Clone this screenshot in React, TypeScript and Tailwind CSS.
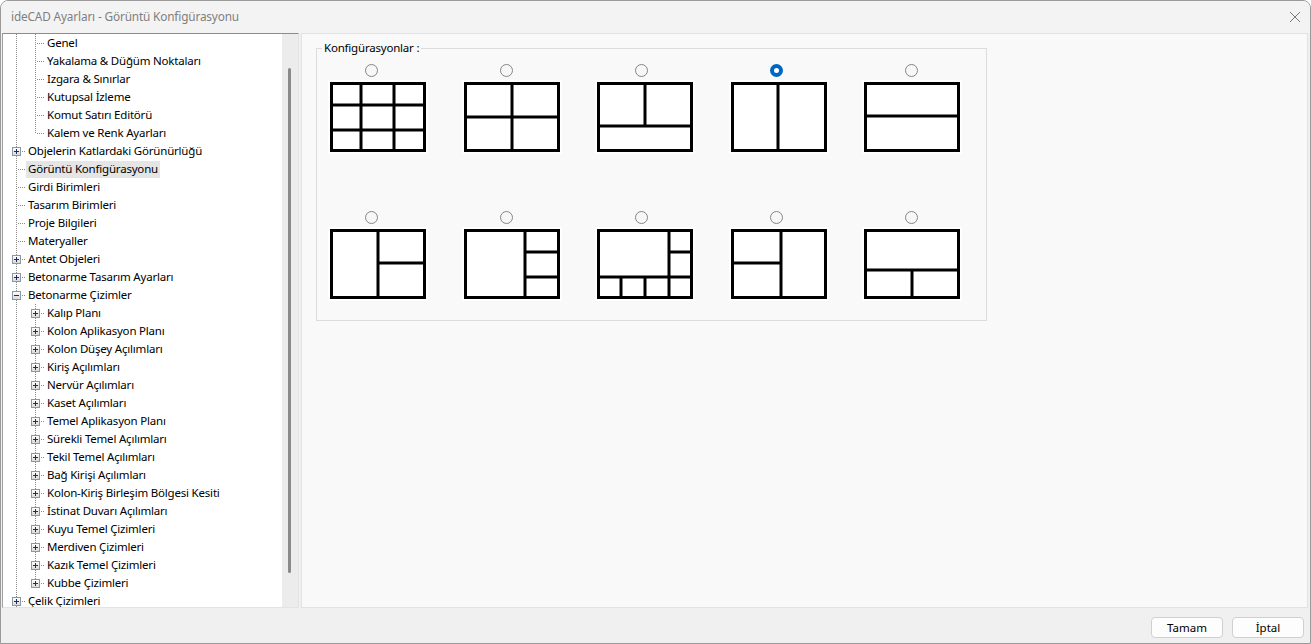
import React from "react";

type Row = {
  label: string;
  level: 0 | 1;
  box?: "+" | "-";
  last?: boolean;
  selected?: boolean;
};

const rows: Row[] = [
  { label: "Genel", level: 1 },
  { label: "Yakalama & Düğüm Noktaları", level: 1 },
  { label: "Izgara & Sınırlar", level: 1 },
  { label: "Kutupsal İzleme", level: 1 },
  { label: "Komut Satırı Editörü", level: 1 },
  { label: "Kalem ve Renk Ayarları", level: 1, last: true },
  { label: "Objelerin Katlardaki Görünürlüğü", level: 0, box: "+" },
  { label: "Görüntü Konfigürasyonu", level: 0, selected: true },
  { label: "Girdi Birimleri", level: 0 },
  { label: "Tasarım Birimleri", level: 0 },
  { label: "Proje Bilgileri", level: 0 },
  { label: "Materyaller", level: 0 },
  { label: "Antet Objeleri", level: 0, box: "+" },
  { label: "Betonarme Tasarım Ayarları", level: 0, box: "+" },
  { label: "Betonarme Çizimler", level: 0, box: "-" },
  { label: "Kalıp Planı", level: 1, box: "+" },
  { label: "Kolon Aplikasyon Planı", level: 1, box: "+" },
  { label: "Kolon Düşey Açılımları", level: 1, box: "+" },
  { label: "Kiriş Açılımları", level: 1, box: "+" },
  { label: "Nervür Açılımları", level: 1, box: "+" },
  { label: "Kaset Açılımları", level: 1, box: "+" },
  { label: "Temel Aplikasyon Planı", level: 1, box: "+" },
  { label: "Sürekli Temel Açılımları", level: 1, box: "+" },
  { label: "Tekil Temel Açılımları", level: 1, box: "+" },
  { label: "Bağ Kirişi Açılımları", level: 1, box: "+" },
  { label: "Kolon-Kiriş Birleşim Bölgesi Kesiti", level: 1, box: "+" },
  { label: "İstinat Duvarı Açılımları", level: 1, box: "+" },
  { label: "Kuyu Temel Çizimleri", level: 1, box: "+" },
  { label: "Merdiven Çizimleri", level: 1, box: "+" },
  { label: "Kazık Temel Çizimleri", level: 1, box: "+" },
  { label: "Kubbe Çizimleri", level: 1, box: "+", last: true },
  { label: "Çelik Çizimleri", level: 0, box: "+" },
];

const DOT = "#8a8a8a";

function Guide() {
  return (
    <svg width="19" height="18" className="shrink-0 block">
      <line x1="13.5" y1="0" x2="13.5" y2="18" stroke={DOT} strokeWidth="1" strokeDasharray="1 1" />
    </svg>
  );
}

function Connector({ box, last }: { box?: "+" | "-"; last?: boolean }) {
  return (
    <svg width="23" height="18" className="shrink-0 block">
      <defs>
        <linearGradient id="bx" x1="0" y1="0" x2="0" y2="1">
          <stop offset="0" stopColor="#ffffff" />
          <stop offset="1" stopColor="#d8d8d8" />
        </linearGradient>
      </defs>
      <line x1="13.5" y1="0" x2="13.5" y2={last ? 10 : 18} stroke={DOT} strokeWidth="1" strokeDasharray="1 1" />
      <line x1="15" y1="9.5" x2="23" y2="9.5" stroke={DOT} strokeWidth="1" strokeDasharray="1 1" />
      {box && (
        <g>
          <rect x="9.5" y="5.5" width="8" height="8" fill="url(#bx)" stroke="#8d96a8" strokeWidth="1" />
          <line x1="11" y1="9.5" x2="16" y2="9.5" stroke="#1f2d5c" strokeWidth="1" />
          {box === "+" && <line x1="13.5" y1="7" x2="13.5" y2="12" stroke="#1f2d5c" strokeWidth="1" />}
        </g>
      )}
    </svg>
  );
}

function TreeRow({ r }: { r: Row }) {
  return (
    <div className="flex h-[18px] items-start shrink-0">
      {r.level === 1 && <Guide />}
      <Connector box={r.box} last={r.last} />
      <span
        className={
          "mt-[1px] h-[17px] leading-[16px] px-[2px] whitespace-nowrap text-[11.5px] tracking-[-0.2px] text-black " +
          (r.selected ? "bg-[#e5e5e5]" : "")
        }
      >
        {r.label}
      </span>
    </div>
  );
}

type Seg = [number, number, number, number];
const layouts: Seg[][] = [
  [[31, 0, 31, 70], [64, 0, 64, 70], [0, 23, 96, 23], [0, 48, 96, 48]],
  [[48, 0, 48, 70], [0, 35, 96, 35]],
  [[0, 44, 96, 44], [48, 0, 48, 44]],
  [[47, 0, 47, 70]],
  [[0, 34, 96, 34]],
  [[48, 0, 48, 70], [48, 34, 96, 34]],
  [[61, 0, 61, 70], [61, 23, 96, 23], [61, 48, 96, 48]],
  [[0, 48, 96, 48], [72, 0, 72, 70], [72, 23, 96, 23], [24, 48, 24, 70], [48, 48, 48, 70]],
  [[50, 0, 50, 70], [0, 34, 50, 34]],
  [[0, 41, 96, 41], [48, 41, 48, 70]],
];

function Layout({ segs }: { segs: Seg[] }) {
  return (
    <svg width="100" height="74" className="block">
      <rect x="0" y="0" width="100" height="74" fill="#ffffff" />
      <g transform="translate(2,2)">
        {segs.map((s, i) => (
          <line key={i} x1={s[0]} y1={s[1]} x2={s[2]} y2={s[3]} stroke="#000" strokeWidth="3" />
        ))}
        <rect x="1.5" y="1.5" width="93" height="67" fill="none" stroke="#000" strokeWidth="3" />
      </g>
    </svg>
  );
}

function Radio({ checked }: { checked?: boolean }) {
  return checked ? (
    <div className="w-[13px] h-[13px] rounded-full bg-[#0067c0] flex items-center justify-center">
      <div className="w-[5px] h-[5px] rounded-full bg-white" />
    </div>
  ) : (
    <div className="w-[13px] h-[13px] rounded-full border border-[#858585] bg-[#f7f7f7]" />
  );
}

function RadioRow({ sel }: { sel: number }) {
  return (
    <div className="grid grid-cols-[repeat(5,13px)] gap-x-[121.9px] pl-[48px]">
      {[0, 1, 2, 3, 4].map((i) => (
        <Radio key={i} checked={i === sel} />
      ))}
    </div>
  );
}

function ImageRow({ start }: { start: number }) {
  return (
    <div className="grid grid-cols-[repeat(5,100px)] gap-x-[33.5px] pl-[11px]">
      {layouts.slice(start, start + 5).map((l, i) => (
        <Layout key={i} segs={l} />
      ))}
    </div>
  );
}

export default function App() {
  return (
    <div
      className="w-[1311px] h-[644px] bg-[#f0f0f0] border border-[#9a9a9a] rounded-t-[8px] overflow-hidden flex flex-col"
      style={{ fontFamily: "'Noto Sans', 'Open Sans', sans-serif" }}
    >
      {/* Title bar */}
      <div className="h-[32px] shrink-0 flex items-center justify-between pl-[10px] pr-[8px] bg-[#f3f3f3]">
        <span className="text-[11.8px] text-[#7f7f7f] tracking-[-0.15px]">ideCAD Ayarları - Görüntü Konfigürasyonu</span>
        <svg width="12" height="12" viewBox="0 0 12 12" className="mr-[1px]">
          <path d="M1 1 L11 11 M11 1 L1 11" stroke="#7a7a7a" strokeWidth="1" fill="none" />
        </svg>
      </div>

      {/* Body */}
      <div className="h-[575px] shrink-0 flex">
        {/* Tree */}
        <div className="ml-[1px] w-[297px] h-full flex border-t border-l border-t-[#8c8c8c] border-l-[#a0a0a0] border-r border-b border-r-[#e3e3e3] border-b-[#e3e3e3]">
          <div className="w-[279px] h-full bg-white overflow-hidden flex flex-col">
            {rows.map((r, i) => (
              <TreeRow key={i} r={r} />
            ))}
          </div>
          <div className="flex-1 h-full bg-[#ececec] flex justify-center pt-[34px]">
            <div className="w-[3px] h-[505px] rounded-full bg-[#8a8a8a] ml-[-1px]" />
          </div>
        </div>

        {/* Right panel */}
        <div className="ml-[2px] w-[1007px] h-full bg-[#f9f9f9] border border-[#e2e2e2]">
          <fieldset className="ml-[14px] mt-[6px] w-[671px] border border-[#dcdcdc] pb-[19px]">
            <legend className="ml-[5px] px-[2px] text-[11.5px] tracking-[-0.2px] leading-[16px] text-black">Konfigürasyonlar :</legend>
            <div className="mt-[8px]">
              <RadioRow sel={3} />
            </div>
            <div className="mt-[3px]">
              <ImageRow start={0} />
            </div>
            <div className="mt-[57px]">
              <RadioRow sel={-1} />
            </div>
            <div className="mt-[3px]">
              <ImageRow start={5} />
            </div>
          </fieldset>
        </div>
      </div>

      {/* Bottom bar */}
      <div className="flex-1 flex justify-end items-start pt-[9px] pr-[6px] gap-[9px]">
        <button className="w-[72px] h-[21px] rounded-[4px] border border-[#d0d0d0] bg-[#fdfdfd] text-[11.5px] text-black leading-[19px]">
          Tamam
        </button>
        <button className="w-[72px] h-[21px] rounded-[4px] border border-[#d0d0d0] bg-[#fdfdfd] text-[11.5px] text-black leading-[19px]">
          İptal
        </button>
      </div>
    </div>
  );
}
